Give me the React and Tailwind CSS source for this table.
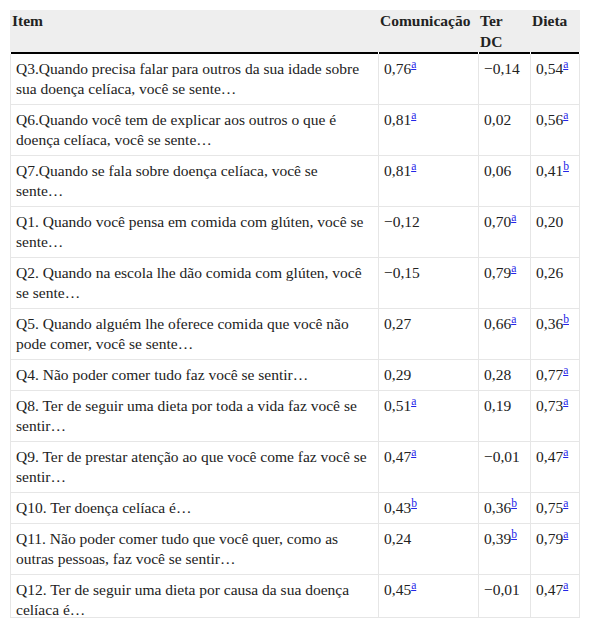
import React from 'react';

// Factor loadings table (Comunicação / Ter DC / Dieta)
const rows = [
  ['Q3.Quando precisa falar para outros da sua idade sobre sua doença celíaca, você se sente…', ['0,76', 'a'], ['−0,14'], ['0,54', 'a']],
  ['Q6.Quando você tem de explicar aos outros o que é doença celíaca, você se sente…', ['0,81', 'a'], ['0,02'], ['0,56', 'a']],
  ['Q7.Quando se fala sobre doença celíaca, você se sente…', ['0,81', 'a'], ['0,06'], ['0,41', 'b']],
  ['Q1. Quando você pensa em comida com glúten, você se sente…', ['−0,12'], ['0,70', 'a'], ['0,20']],
  ['Q2. Quando na escola lhe dão comida com glúten, você se sente…', ['−0,15'], ['0,79', 'a'], ['0,26']],
  ['Q5. Quando alguém lhe oferece comida que você não pode comer, você se sente…', ['0,27'], ['0,66', 'a'], ['0,36', 'b']],
  ['Q4. Não poder comer tudo faz você se sentir…', ['0,29'], ['0,28'], ['0,77', 'a']],
  ['Q8. Ter de seguir uma dieta por toda a vida faz você se sentir…', ['0,51', 'a'], ['0,19'], ['0,73', 'a']],
  ['Q9. Ter de prestar atenção ao que você come faz você se sentir…', ['0,47', 'a'], ['−0,01'], ['0,47', 'a']],
  ['Q10. Ter doença celíaca é…', ['0,43', 'b'], ['0,36', 'b'], ['0,75', 'a']],
  ['Q11. Não poder comer tudo que você quer, como as outras pessoas, faz você se sentir…', ['0,24'], ['0,39', 'b'], ['0,79', 'a']],
  ['Q12. Ter de seguir uma dieta por causa da sua doença celíaca é…', ['0,45', 'a'], ['−0,01'], ['0,47', 'a']],
];

const Value = ({ v }) => (
  <>
    {v[0]}
    {v[1] && (
      <sup>
        <a href="#" className="text-[#2424e8] underline">{v[1]}</a>
      </sup>
    )}
  </>
);

export default function App() {
  return (
    <div className="bg-white min-h-[628px] pt-[10px] pl-[10px] font-['Liberation_Serif',serif] text-[#222]">
      <div className="w-[570px] h-[608px] overflow-hidden border-b border-[#e6e6e6]">
        <table className="w-[570px] table-fixed border-separate border-spacing-0 font-['Liberation_Serif',serif] text-[15.5px] leading-[20px] text-[#222]">
          <colgroup>
            <col className="w-[368px]" />
            <col className="w-[100px]" />
            <col className="w-[52px]" />
            <col className="w-[50px]" />
          </colgroup>
          <thead>
            <tr className="bg-[#eeeeee] text-left align-top font-bold leading-[21px]">
              <th className="p-0 pl-[2px] h-[42px]">Item</th>
              <th className="p-0 pl-[2px]">Comunicação</th>
              <th className="p-0 pl-[2px] pr-[6px]">Ter DC</th>
              <th className="p-0 pl-[2px]">Dieta</th>
            </tr>
            <tr>
              <td className="p-0 h-[2px]"><div className="ml-px h-[2px] bg-black" /></td>
              <td className="p-0 h-[2px]"><div className="ml-px h-[2px] bg-black" /></td>
              <td className="p-0 h-[2px]"><div className="ml-px h-[2px] bg-black" /></td>
              <td className="p-0 h-[2px]"><div className="mx-px h-[2px] bg-black" /></td>
            </tr>
          </thead>
          <tbody>
            {rows.map((r, i) => (
              <tr key={i} className="align-top">
                <td className="border-l border-b border-[#e6e6e6] pl-[5px] pr-[10px] pt-[5px] pb-[5px]">{r[0]}</td>
                <td className="border-l border-b border-[#e6e6e6] px-[5px] pt-[5px] pb-[5px]"><Value v={r[1]} /></td>
                <td className="border-l border-b border-[#e6e6e6] px-[5px] pt-[5px] pb-[5px] whitespace-nowrap"><Value v={r[2]} /></td>
                <td className="border-l border-r border-b border-[#e6e6e6] px-[5px] pt-[5px] pb-[5px] whitespace-nowrap"><Value v={r[3]} /></td>
              </tr>
            ))}
          </tbody>
        </table>
      </div>
    </div>
  );
}
